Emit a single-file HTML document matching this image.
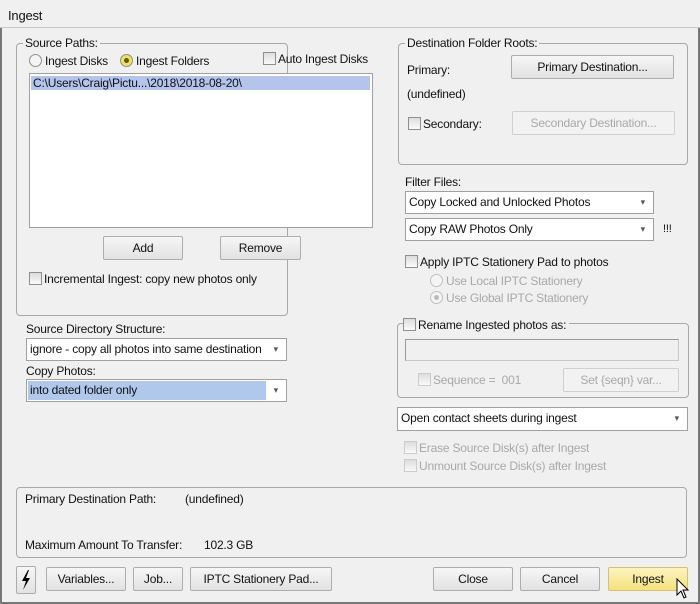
<!DOCTYPE html>
<html><head><style>
*{box-sizing:border-box;margin:0;padding:0}
body{width:700px;height:604px;background:#f0f0f0;font-family:"Liberation Sans",sans-serif;font-size:12px;color:#111;position:relative;overflow:hidden;letter-spacing:-0.2px}
.a{position:absolute;white-space:nowrap}
.grp{position:absolute;border:1px solid #a8a8a8;border-radius:4px}
.lg{position:absolute;background:#f0f0f0;padding:0 2px;top:-8px;left:6px}
.btn{position:absolute;border:1px solid #adadad;border-radius:2px;background:linear-gradient(#f6f6f6,#e2e2e2);text-align:center;line-height:22px}
.cb{display:inline-block;width:13px;height:13px;border:1px solid #8f8f8f;background:linear-gradient(#ddd,#fafafa);vertical-align:-2px;margin-right:2px}
.rd{display:inline-block;width:13px;height:13px;border:1px solid #8f8f8f;border-radius:50%;background:#f4f4f4;vertical-align:-2px;margin-right:3px;position:relative}
.dd{position:absolute;border:1px solid #a0a0a0;background:#fff;padding-left:3px;line-height:21px}
.dd:after{content:"▾";position:absolute;right:8px;top:0;font-size:9px;color:#555}
.dis{color:#a8a8a8}
</style></head><body>
<div class="a" style="left:0;top:0;width:700px;height:28px;background:#f0f0f0;border-bottom:1px solid #c8c8c8"></div>
<div class="a" style="left:8px;top:8px;font-size:13px">Ingest</div>
<div class="a" style="left:0;top:28px;width:700px;height:576px;border:2px solid #777;border-top:none"></div>

<div class="grp" style="left:16px;top:43px;width:272px;height:273px"><span class="lg">Source Paths:</span></div>
<div class="a" style="left:29px;top:54px"><span class="rd"></span>Ingest Disks</div>
<div class="a" style="left:120px;top:54px"><span class="rd" style="background:#f0e060"><span style="position:absolute;left:3px;top:3px;width:5px;height:5px;border-radius:50%;background:#5a5a00"></span></span>Ingest Folders</div>
<div class="a" style="left:263px;top:52px"><span class="cb"></span>Auto Ingest Disks</div>
<div class="a" style="left:29px;top:73px;width:344px;height:155px;border:1px solid #a0a0a0;background:#fff"></div>
<div class="a" style="left:31px;top:76px;width:339px;height:14px;background:#b4c4ec;line-height:14px;padding-left:2px">C:\Users\Craig\Pictu...\2018\2018-08-20\</div>
<div class="btn" style="left:103px;top:236px;width:80px;height:24px">Add</div>
<div class="btn" style="left:220px;top:236px;width:81px;height:24px">Remove</div>
<div class="a" style="left:29px;top:272px"><span class="cb"></span>Incremental Ingest: copy new photos only</div>

<div class="a" style="left:26px;top:322px">Source Directory Structure:</div>
<div class="dd" style="left:26px;top:338px;width:261px;height:23px">ignore - copy all photos into same destination</div>
<div class="a" style="left:26px;top:364px">Copy Photos:</div>
<div class="dd" style="left:26px;top:379px;width:261px;height:23px;padding:1px"><div style="background:#b0c8ec;width:238px;height:19px;line-height:19px;padding-left:2px">into dated folder only</div></div>

<div class="grp" style="left:398px;top:43px;width:290px;height:122px"><span class="lg">Destination Folder Roots:</span></div>
<div class="a" style="left:407px;top:63px">Primary:</div>
<div class="btn" style="left:511px;top:55px;width:163px;height:24px">Primary Destination...</div>
<div class="a" style="left:407px;top:87px">(undefined)</div>
<div class="a" style="left:408px;top:117px"><span class="cb"></span>Secondary:</div>
<div class="btn dis" style="left:512px;top:111px;width:163px;height:24px;background:#f2f2f2;border-color:#d0d0d0">Secondary Destination...</div>

<div class="a" style="left:405px;top:175px">Filter Files:</div>
<div class="dd" style="left:405px;top:191px;width:249px;height:23px">Copy Locked and Unlocked Photos</div>
<div class="dd" style="left:405px;top:218px;width:249px;height:23px">Copy RAW Photos Only</div>
<div class="a" style="left:663px;top:223px;font-size:11px">!!!</div>
<div class="a" style="left:405px;top:255px"><span class="cb"></span>Apply IPTC Stationery Pad to photos</div>
<div class="a dis" style="left:430px;top:274px"><span class="rd" style="border-color:#c0c0c0"></span>Use Local IPTC Stationery</div>
<div class="a dis" style="left:430px;top:291px"><span class="rd" style="border-color:#c0c0c0"><span style="position:absolute;left:3px;top:3px;width:5px;height:5px;border-radius:50%;background:#bbb"></span></span>Use Global IPTC Stationery</div>

<div class="grp" style="left:397px;top:323px;width:292px;height:75px"></div>
<div class="a" style="left:403px;top:318px;background:#f0f0f0;padding-right:3px"><span class="cb"></span>Rename Ingested photos as:</div>
<div class="a" style="left:405px;top:339px;width:274px;height:22px;border:1px solid #c8c8c8;border-left-color:#999;border-top-color:#999;background:#f0f0f0"></div>
<div class="a dis" style="left:418px;top:373px"><span class="cb" style="border-color:#ccc"></span>Sequence = &nbsp;<span>001</span></div>
<div class="btn dis" style="left:563px;top:368px;width:116px;height:24px;background:#f2f2f2;border-color:#d0d0d0">Set {seqn} var...</div>
<div class="dd" style="left:397px;top:407px;width:291px;height:24px">Open contact sheets during ingest</div>
<div class="a dis" style="left:404px;top:441px"><span class="cb" style="border-color:#ccc"></span>Erase Source Disk(s) after Ingest</div>
<div class="a dis" style="left:404px;top:459px"><span class="cb" style="border-color:#ccc"></span>Unmount Source Disk(s) after Ingest</div>

<div class="grp" style="left:16px;top:487px;width:671px;height:71px"></div>
<div class="a" style="left:25px;top:492px">Primary Destination Path:</div>
<div class="a" style="left:185px;top:492px">(undefined)</div>
<div class="a" style="left:25px;top:538px">Maximum Amount To Transfer:</div>
<div class="a" style="left:204px;top:538px">102.3 GB</div>

<div class="btn" style="left:16px;top:566px;width:20px;height:28px"><svg width="18" height="26" viewBox="0 0 18 26" style="position:absolute;left:0;top:0"><path d="M11 3 L5 14 L9 14 L6 23 L13 11 L9 11 L12 3 Z" fill="#000"/></svg></div>
<div class="btn" style="left:46px;top:567px;width:80px;height:24px">Variables...</div>
<div class="btn" style="left:133px;top:567px;width:50px;height:24px">Job...</div>
<div class="btn" style="left:190px;top:567px;width:142px;height:24px">IPTC Stationery Pad...</div>
<div class="btn" style="left:433px;top:567px;width:80px;height:24px">Close</div>
<div class="btn" style="left:520px;top:567px;width:80px;height:24px">Cancel</div>
<div class="btn" style="left:608px;top:567px;width:80px;height:24px;background:linear-gradient(#fdf4c0,#f5e27c);border-color:#d8c070">Ingest</div>
<svg class="a" style="left:676px;top:578px" width="14" height="22" viewBox="0 0 14 22"><path d="M1 1 L1 17 L5 13 L8 20 L10 19 L7 12 L12 12 Z" fill="#fff" stroke="#000" stroke-width="1"/></svg>
</body></html>
